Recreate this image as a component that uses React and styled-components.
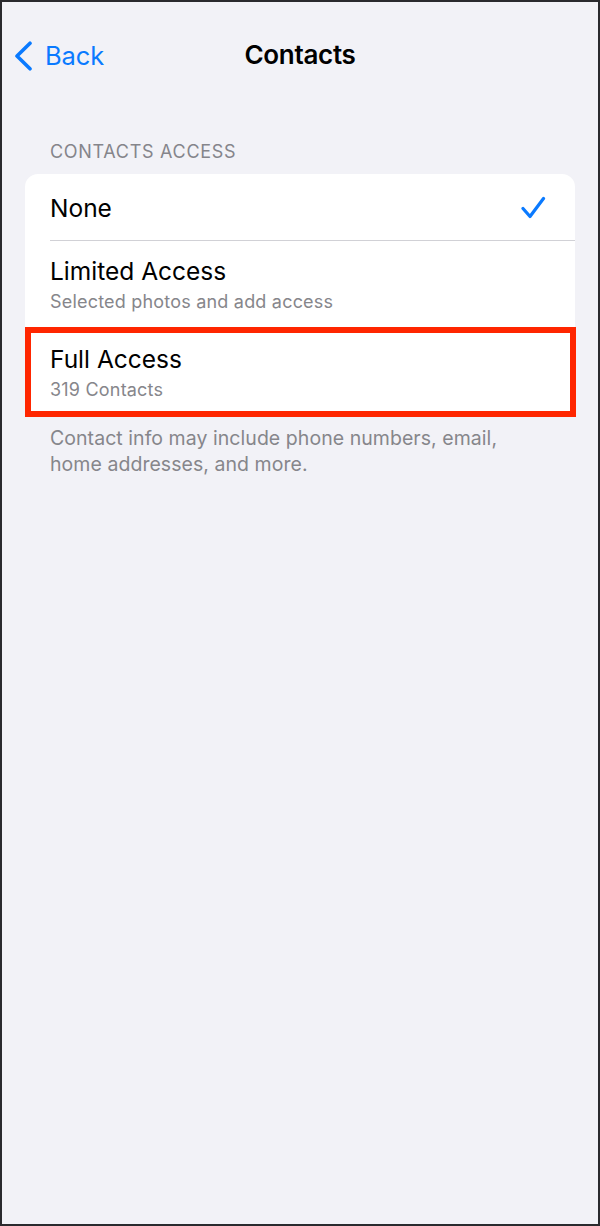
import React from "react";
import styled, { createGlobalStyle } from "styled-components";

const GlobalStyle = createGlobalStyle`
  html, body {
    margin: 0;
    padding: 0;
    background: #f2f2f7;
  }
  * {
    box-sizing: border-box;
  }
`;

const options = [
  { id: "none", title: "None", checked: true },
  { id: "limited", title: "Limited Access", subtitle: "Selected photos and add access" },
  { id: "full", title: "Full Access", subtitle: "319 Contacts", highlighted: true },
];

const BackChevron = () => (
  <svg width="21" height="30" viewBox="0 0 21 30" fill="none">
    <path
      d="M17 2.2 L4 15 L17 27.8"
      stroke="#0a7aff"
      strokeWidth="3.6"
      strokeLinecap="round"
      strokeLinejoin="round"
    />
  </svg>
);

const CheckMark = () => (
  <svg width="26" height="24" viewBox="0 0 26 24" fill="none">
    <path
      d="M2 12.5 L9 20.5 L22.5 2.5"
      stroke="#0a7aff"
      strokeWidth="3.2"
      strokeLinecap="round"
      strokeLinejoin="round"
    />
  </svg>
);

const App = () => {
  return (
    <Screen>
      <GlobalStyle />
      <NavBar>
        <BackButton>
          <BackChevron />
          <BackLabel>Back</BackLabel>
        </BackButton>
        <NavTitle>Contacts</NavTitle>
      </NavBar>

      <Section>
        <SectionHeader>Contacts Access</SectionHeader>
        <Card>
          {options.map((opt, i) => (
            <Row key={opt.id} $tall={!!opt.subtitle}>
              <RowText>
                <RowTitle>{opt.title}</RowTitle>
                {opt.subtitle && <RowSubtitle>{opt.subtitle}</RowSubtitle>}
              </RowText>
              {opt.checked && <CheckMark />}
              {i < options.length - 1 && <Separator />}
              {opt.highlighted && <Highlight />}
            </Row>
          ))}
        </Card>
        <SectionFooter>
          Contact info may include phone numbers, email,
          <br />
          home addresses, and more.
        </SectionFooter>
      </Section>
    </Screen>
  );
};

const Screen = styled.div`
  width: 600px;
  height: 1226px;
  background: #f2f2f7;
  border: 2px solid #2a2a2e;
  font-family: Inter, "Liberation Sans", sans-serif;
  overflow: hidden;
`;

const NavBar = styled.div`
  position: relative;
  height: 106px;
  display: flex;
  align-items: center;
  justify-content: center;
  padding-bottom: 4px;
`;

const BackButton = styled.div`
  position: absolute;
  left: 11px;
  top: 38px;
  display: flex;
  align-items: center;
  gap: 11px;
  color: #0a7aff;
`;

const BackLabel = styled.span`
  font-size: 25.5px;
  letter-spacing: -0.1px;
`;

const NavTitle = styled.h1`
  margin: 0;
  margin-top: 3px;
  font-size: 26px;
  font-weight: 600;
  color: #000;
  letter-spacing: -0.3px;
`;

const Section = styled.div`
  padding: 31px 23px 0 23px;
`;

const SectionHeader = styled.div`
  text-transform: uppercase;
  font-size: 18px;
  color: #85858b;
  padding: 1px 0 10px 25px;
  line-height: 24px;
  letter-spacing: 0.7px;
`;

const Card = styled.div`
  background: #fff;
  border-radius: 13px;
`;

const Row = styled.div`
  position: relative;
  height: ${(p) => (p.$tall ? "88px" : "67px")};
  display: flex;
  align-items: center;
  justify-content: space-between;
  padding: 0 28px 0 25px;
`;

const RowText = styled.div`
  display: flex;
  flex-direction: column;
  gap: 5px;
`;

const RowTitle = styled.div`
  font-size: 24.5px;
  color: #000;
  line-height: 28px;
`;

const RowSubtitle = styled.div`
  font-size: 18px;
  color: #86868b;
  line-height: 24px;
  letter-spacing: 0.2px;
`;

const Separator = styled.div`
  position: absolute;
  left: 25px;
  right: 0;
  bottom: 0;
  height: 1px;
  background: #d1d1d6;
`;

const Highlight = styled.div`
  position: absolute;
  left: 0;
  right: -1px;
  top: -2px;
  bottom: 0;
  border: 6px solid #ff2600;
  pointer-events: none;
`;

const SectionFooter = styled.div`
  font-size: 19.5px;
  color: #86868b;
  line-height: 26px;
  letter-spacing: 0.05px;
  padding: 8px 25px 0 25px;
`;

export default App;
